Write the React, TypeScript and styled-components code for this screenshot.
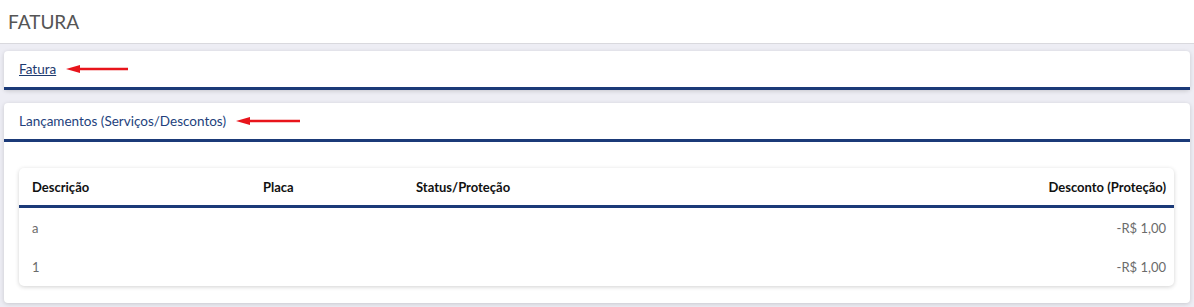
import React from 'react';
import styled, { createGlobalStyle } from 'styled-components';

const GlobalStyle = createGlobalStyle`
  html, body {
    margin: 0;
    padding: 0;
    background: #ededf4;
    font-family: 'Source Sans Pro', Lato, 'Liberation Sans', sans-serif;
  }
`;

const Page = styled.div`
  min-height: 307px;
  background: #ededf4;
`;

const TopBar = styled.div`
  height: 44px;
  background: #fff;
  border-bottom: 1px solid #d9d9de;
  display: flex;
  align-items: center;
  padding-left: 8px;
  box-sizing: border-box;
`;

const PageTitle = styled.h1`
  margin: 0;
  font-size: 19px;
  font-weight: 400;
  color: #555;
`;

const Content = styled.div`
  padding: 7px 4px 4px;
  display: flex;
  flex-direction: column;
  gap: 13px;
`;

const Card = styled.section`
  background: #fff;
  border-radius: 4px;
  box-shadow: 0 1px 4px rgba(0, 0, 0, 0.16);
`;

const CardHeader = styled.div`
  height: 39px;
  box-sizing: border-box;
  border-bottom: 3px solid #1b3a78;
  display: flex;
  align-items: center;
  padding: 0 15px;
  gap: 10px;
`;

const HeaderLink = styled.a`
  font-size: 13.5px;
  color: #1d3a70;
  text-decoration: underline;
  cursor: pointer;
`;

const HeaderTitle = styled.span`
  font-size: 13.5px;
  color: #233f7c;
`;

const CardBody = styled.div`
  padding: 26px 16px 17px 15px;
`;

const TableCard = styled.div`
  border-radius: 5px;
  box-shadow: 0 1px 4px rgba(0, 0, 0, 0.18);
  overflow: hidden;
`;

const Table = styled.table`
  width: 100%;
  table-layout: fixed;
  border-collapse: collapse;
  font-size: 13px;
`;

const Col = styled.col<{ $width?: number }>`
  width: ${({ $width }) => ($width ? `${$width}px` : 'auto')};
`;

const Th = styled.th<{ $right?: boolean }>`
  height: 37px;
  padding: 0 8px 0 13px;
  text-align: ${({ $right }) => ($right ? 'right' : 'left')};
  font-weight: 700;
  color: #111;
  border-bottom: 3px solid #1b3a78;
`;

const Td = styled.td<{ $right?: boolean }>`
  height: 39px;
  padding: 0 8px 0 13px;
  text-align: ${({ $right }) => ($right ? 'right' : 'left')};
  color: #6b6b6b;
`;

const Arrow = ({ width }: { width: number }) => (
  <svg width={width} height="10" viewBox={`0 0 ${width} 10`}>
    <line x1="8" y1="5" x2={width} y2="5" stroke="#e8141b" strokeWidth="2.4" />
    <polygon points="0,5 14,1 14,9" fill="#e8141b" />
  </svg>
);

const rows = [
  { desc: 'a', placa: '', status: '', desconto: '-R$ 1,00' },
  { desc: '1', placa: '', status: '', desconto: '-R$ 1,00' },
];

export default function App() {
  return (
    <Page>
      <GlobalStyle />
      <TopBar>
        <PageTitle>FATURA</PageTitle>
      </TopBar>
      <Content>
        <Card>
          <CardHeader>
            <HeaderLink>Fatura</HeaderLink>
            <Arrow width={62} />
          </CardHeader>
        </Card>
        <Card>
          <CardHeader>
            <HeaderTitle>Lançamentos (Serviços/Descontos)</HeaderTitle>
            <Arrow width={64} />
          </CardHeader>
          <CardBody>
            <TableCard>
              <Table>
                <colgroup>
                  <Col $width={231} />
                  <Col $width={153} />
                  <Col $width={400} />
                  <Col />
                </colgroup>
                <thead>
                  <tr>
                    <Th>Descrição</Th>
                    <Th>Placa</Th>
                    <Th>Status/Proteção</Th>
                    <Th $right>Desconto (Proteção)</Th>
                  </tr>
                </thead>
                <tbody>
                  {rows.map((r, i) => (
                    <tr key={i}>
                      <Td>{r.desc}</Td>
                      <Td>{r.placa}</Td>
                      <Td>{r.status}</Td>
                      <Td $right>{r.desconto}</Td>
                    </tr>
                  ))}
                </tbody>
              </Table>
            </TableCard>
          </CardBody>
        </Card>
      </Content>
    </Page>
  );
}
